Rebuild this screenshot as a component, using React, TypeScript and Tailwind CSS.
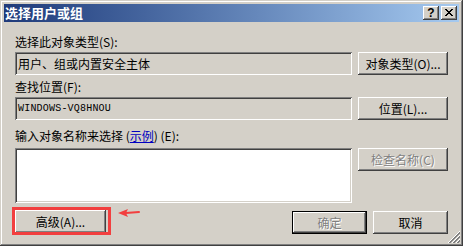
import React from "react";

const raised =
  "shadow-[inset_-1px_-1px_#404040,inset_1px_1px_#ffffff,inset_-2px_-2px_#808080,inset_2px_2px_#d4d0c8]";
const sunken =
  "shadow-[inset_1px_1px_#808080,inset_-1px_-1px_#ffffff,inset_2px_2px_#404040,inset_-2px_-2px_#d4d0c8]";

function Btn({
  children,
  w,
  disabled,
  isDefault,
}: {
  children: React.ReactNode;
  w: string;
  disabled?: boolean;
  isDefault?: boolean;
}) {
  const shadow = isDefault
    ? "shadow-[inset_0_0_0_1px_#000000,inset_-2px_-2px_#404040,inset_2px_2px_#ffffff,inset_-3px_-3px_#808080]"
    : raised;
  return (
    <div
      className={`${w} h-[23px] shrink-0 bg-[#d4d0c8] ${shadow} flex items-center justify-center text-[12px] leading-[14px] ${
        disabled
          ? "text-[#808080] [text-shadow:1px_1px_0_#ffffff]"
          : "text-black"
      }`}
    >
      {children}
    </div>
  );
}

export default function App() {
  return (
    <div className="relative w-[463px] h-[246px] bg-[#d4d0c8] p-[4px] shadow-[inset_-1px_-1px_#404040,inset_1px_1px_#d4d0c8,inset_-2px_-2px_#808080,inset_2px_2px_#ffffff] font-['Noto_Sans_CJK_SC',sans-serif] text-[12px] text-black overflow-hidden">
      {/* Title bar */}
      <div className="h-[18px] flex items-center justify-between bg-gradient-to-r from-[#1f3a7a] to-[#a6caf0] pl-[1px] pr-[2px]">
        <span className="text-white font-bold text-[13px] leading-[18px] tracking-[0px]">
          选择用户或组
        </span>
        <div className="flex gap-[2px]">
          <div
            className={`w-[16px] h-[14px] bg-[#d4d0c8] ${raised} flex items-center justify-center font-['Liberation_Sans',sans-serif] font-bold text-[12px] leading-[12px] pb-[1px]`}
          >
            ?
          </div>
          <div
            className={`w-[16px] h-[14px] bg-[#d4d0c8] ${raised} flex items-center justify-center pb-[1px]`}
          >
            <svg width="8" height="7" viewBox="0 0 8 7" shapeRendering="crispEdges">
              <path
                d="M0 0h2v1h-2z M6 0h2v1h-2z M1 1h2v1h-2z M5 1h2v1h-2z M2 2h4v1h-4z M3 3h2v1h-2z M2 4h4v1h-4z M1 5h2v1h-2z M5 5h2v1h-2z M0 6h2v1h-2z M6 6h2v1h-2z"
                fill="#000"
              />
            </svg>
          </div>
        </div>
      </div>

      {/* Content */}
      <div className="pl-[11px] pr-[11px] pt-[13px] flex flex-col">
        <div className="h-[14px] leading-[14px]">选择此对象类型(S):</div>
        <div className="mt-[3px] flex gap-[6px]">
          <div
            className={`w-[337px] h-[23px] ${sunken} bg-[#d4d0c8] pl-[3px] flex items-center leading-[14px]`}
          >
            用户、组或内置安全主体
          </div>
          <Btn w="w-[90px]">对象类型(O)...</Btn>
        </div>

        <div className="mt-[5px] h-[14px] leading-[14px]">查找位置(F):</div>
        <div className="mt-[3px] flex gap-[6px]">
          <div
            className={`w-[337px] h-[23px] ${sunken} bg-[#d4d0c8] pl-[3px] flex items-center font-['Liberation_Mono',monospace] text-[10px] tracking-[0.2px]`}
          >
            WINDOWS-VQ8HNOU
          </div>
          <Btn w="w-[90px]">位置(L)...</Btn>
        </div>

        <div className="mt-[9px] h-[14px] leading-[14px]">
          输入对象名称来选择 (
          <span className="text-[#0000c0] underline">示例</span>) (E):
        </div>
        <div className="mt-[5px] flex gap-[6px] items-start">
          <div className={`w-[337px] h-[55px] ${sunken} bg-white`} />
          <Btn w="w-[90px]" disabled>
            检查名称(C)
          </Btn>
        </div>

        <div className="mt-[7px] flex items-start">
          <Btn w="w-[91px]">高级(A)...</Btn>
          <div className="ml-auto flex gap-[6px] mt-[1px]">
            <Btn w="w-[75px]" disabled isDefault>
              确定
            </Btn>
            <Btn w="w-[75px]">取消</Btn>
          </div>
        </div>
      </div>

      {/* Red annotation box */}
      <div className="absolute left-[12px] top-[207px] w-[99px] h-[28px] border-[3px] border-[#f23f3f]" />

      {/* Red arrow */}
      <svg
        className="absolute left-[117px] top-[207px]"
        width="24"
        height="12"
        viewBox="0 0 24 12"
      >
        <path d="M1 6 L11 2 L9 6 L11 10 Z" fill="#f23f3f" />
        <path d="M9 6 L22 5" stroke="#f23f3f" strokeWidth="2" strokeLinecap="round" />
      </svg>

      {/* Size grip */}
      <svg
        className="absolute right-[3px] bottom-[3px]"
        width="12"
        height="12"
        viewBox="0 0 12 12"
        shapeRendering="crispEdges"
      >
        {[0, 4, 8].map((k) => (
          <g key={k}>
            <line x1={12} y1={k} x2={k} y2={12} stroke="#ffffff" />
            <line x1={12} y1={k + 1} x2={k + 1} y2={12} stroke="#808080" />
            <line x1={12} y1={k + 2} x2={k + 2} y2={12} stroke="#808080" />
          </g>
        ))}
      </svg>
    </div>
  );
}
